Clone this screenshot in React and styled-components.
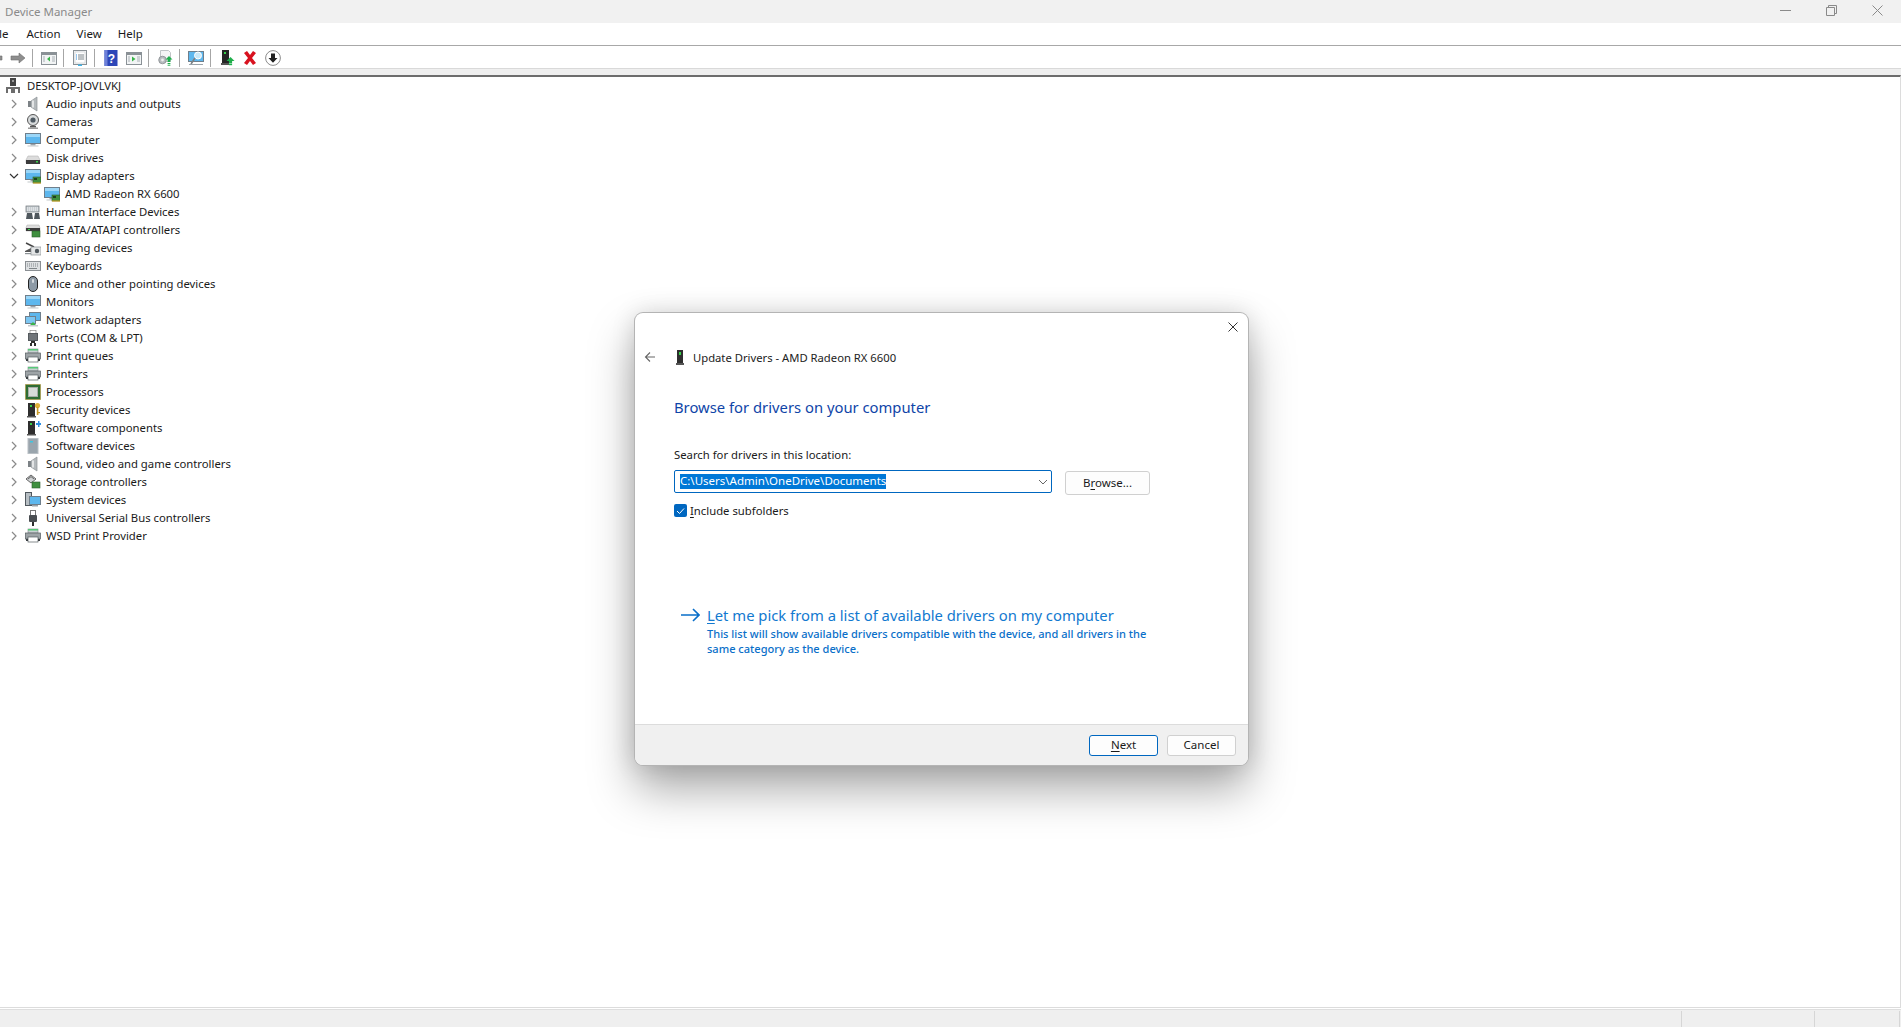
import styled, { createGlobalStyle } from "styled-components";

const GlobalStyle = createGlobalStyle`
  html, body {
    margin: 0;
    padding: 0;
    background: #ffffff;
    overflow: hidden;
  }
  * {
    box-sizing: border-box;
  }
`;

const uiFont = `"Noto Sans", "Open Sans", "Liberation Sans", sans-serif`;

const Page = styled.div`
  width: 1901px;
  height: 1027px;
  display: flex;
  flex-direction: column;
  position: relative;
  font-family: ${uiFont};
  font-size: 11.5px;
  color: #1a1a1a;
  background: #ffffff;
`;

const TitleBar = styled.header`
  height: 23px;
  flex: none;
  display: flex;
  align-items: center;
  justify-content: space-between;
  background: #f1f1f1;
  padding-left: 5px;
  color: #8a8a8a;
`;

const WindowControls = styled.div`
  display: flex;
  gap: 35px;
  padding-right: 18px;
  padding-bottom: 3px;
`;

const MenuBar = styled.nav`
  height: 23px;
  flex: none;
  display: flex;
  align-items: center;
  padding-bottom: 2px;
  border-bottom: 1px solid #a8a8a8;
  overflow: hidden;
`;

const MenuItem = styled.span`
  margin-left: ${(p) => p.$left}px;
`;

const ToolBar = styled.div`
  height: 23px;
  flex: none;
  display: flex;
  align-items: center;
  padding-top: 2px;
  border-bottom: 1px solid #d9d9d9;
  background: #ffffff;
`;

const ToolButton = styled.span`
  width: 23px;
  height: 20px;
  flex: none;
  display: flex;
  align-items: center;
  padding-left: 3px;
  margin-left: ${(p) => p.$offset || 0}px;
`;

const ToolSep = styled.span`
  width: 8px;
  height: 18px;
  flex: none;
  padding-left: 2px;
  &::before {
    content: "";
    display: block;
    width: 1px;
    height: 100%;
    background: #a6a6a6;
  }
`;

const Strip = styled.div`
  height: 6px;
  flex: none;
  background: #efefef;
`;

const TreePane = styled.main`
  flex: 1;
  border-top: 2px solid #6d6d6d;
  border-right: 1px solid #dcdcdc;
  border-bottom: 1px solid #dcdcdc;
  font-size: 11.3px;
`;

const Row = styled.div`
  height: 18px;
  display: flex;
  align-items: center;
  padding-left: ${(p) => p.$indent}px;
  padding-bottom: 1px;
  white-space: nowrap;
`;

const Expander = styled.span`
  width: 25px;
  height: 17px;
  flex: none;
  display: flex;
  align-items: center;
  justify-content: center;
  padding-left: 3px;
`;

const RowIcon = styled.span`
  width: 16px;
  height: 16px;
  flex: none;
  display: flex;
  margin-right: ${(p) => p.$gap}px;
`;

const StatusBar = styled.footer`
  height: 18px;
  flex: none;
  margin-top: 1px;
  display: flex;
  justify-content: flex-end;
  background: #efefef;
  border-top: 1px solid #dedede;
`;

const StatusCell = styled.span`
  width: ${(p) => p.$width}px;
  height: 100%;
  margin-top: 1px;
  border-left: 1px solid #d6d6d6;
`;

const DialogShadow = styled.div`
  position: absolute;
  left: 635px;
  top: 313px;
  width: 613px;
  height: 452px;
  border-radius: 8px;
  box-shadow: 0 24px 46px rgba(0, 0, 0, 0.34), 0 0 24px rgba(0, 0, 0, 0.14);
`;

const Dialog = styled.section`
  position: absolute;
  left: 635px;
  top: 313px;
  width: 613px;
  height: 452px;
  display: flex;
  flex-direction: column;
  background: #ffffff;
  border-radius: 8px;
  overflow: hidden;
  box-shadow: 0 0 0 1px #b4b4b4;
`;

const CloseButton = styled.span`
  position: absolute;
  top: 9px;
  right: 10px;
  width: 10px;
  height: 10px;
  display: flex;
`;

const DialogBody = styled.div`
  flex: 1;
  padding: 35px 0 0 39px;
`;

const DialogHeader = styled.div`
  height: 20px;
  display: flex;
  align-items: center;
  margin-left: -30px;
  padding-bottom: 2px;
  font-size: 11.25px;
  color: #222222;
`;

const BackArrow = styled.span`
  width: 12px;
  height: 12px;
  display: flex;
  margin-right: 20px;
`;

const DeviceIcon = styled.span`
  width: 8px;
  height: 15px;
  display: flex;
  margin-right: 9px;
`;

const Heading = styled.h1`
  margin: 27px 0 0;
  height: 24px;
  line-height: 24px;
  font-size: 14.8px;
  font-weight: 400;
  color: #0f45a8;
`;

const FieldLabel = styled.div`
  margin-top: 26px;
  height: 20px;
  line-height: 20px;
  font-size: 11.3px;
`;

const FieldRow = styled.div`
  margin-top: 5px;
  display: flex;
  align-items: flex-start;
  gap: 13px;
`;

const Combo = styled.div`
  width: 378px;
  height: 23px;
  display: flex;
  align-items: center;
  justify-content: space-between;
  padding: 0 3px 0 5px;
  border: 1px solid #0067c0;
  border-radius: 2px;
`;

const Selected = styled.span`
  height: 15px;
  line-height: 13px;
  background: #0078d7;
  color: #ffffff;
`;

const Button = styled.span`
  width: ${(p) => p.$width}px;
  height: ${(p) => p.$height}px;
  display: flex;
  align-items: center;
  justify-content: center;
  padding-bottom: 2px;
  background: #fdfdfd;
  border: 1px solid ${(p) => (p.$primary ? "#0067c0" : "#d0d0d0")};
  border-radius: 3px;
  margin-top: ${(p) => p.$top || 0}px;
`;

const Mnemonic = styled.span`
  text-decoration: underline;
  text-underline-offset: 2px;
`;

const CheckRow = styled.label`
  margin-top: 9px;
  height: 13px;
  display: flex;
  align-items: center;
  gap: 3px;
  font-size: 11.3px;
`;

const CheckBox = styled.span`
  width: 13px;
  height: 13px;
  display: flex;
  align-items: center;
  justify-content: center;
  background: #0067c0;
  border-radius: 2px;
`;

const LinkBlock = styled.a`
  margin: 87px 0 0 7px;
  display: grid;
  grid-template-columns: 26px auto;
  color: #0a6fc9;
`;

const LinkArrow = styled.span`
  height: 22px;
  display: flex;
  align-items: center;
`;

const LinkTitle = styled.span`
  height: 22px;
  line-height: 22px;
  font-size: 14.8px;
  color: #1279d0;
`;

const LinkNote = styled.span`
  grid-column: 2;
  width: 446px;
  line-height: 15px;
  font-size: 11.05px;
  font-weight: 500;
`;

const Footer = styled.div`
  height: 41px;
  flex: none;
  display: flex;
  align-items: center;
  justify-content: flex-end;
  gap: 9px;
  padding-right: 12px;
  background: #f0f0f0;
  border-top: 1px solid #dcdcdc;
`;

const Svg = ({ children, size = 16, box = 16 }) => (
  <svg width={size} height={size} viewBox={`0 0 ${box} ${box}`}>
    {children}
  </svg>
);

const Screen = ({ w = 15 }) => (
  <>
    <rect x="0.5" y="1.5" width={w} height="10" fill="#5db7ee" stroke="#6f7f8c" />
    <rect x="1" y="2" width={w - 1} height="3" fill="#9bd6f7" />
    <rect x={w / 2 - 2} y="12" width="5" height="1.5" fill="#9aa3aa" />
    <rect x={w / 2 - 5} y="13.5" width="11" height="1" fill="#c4c9cc" />
  </>
);

const GreenCard = ({ x = 8, y = 9 }) => (
  <>
    <rect x={x} y={y} width="8" height="6" fill="#3f8f3f" stroke="#2c5f2c" strokeWidth="0.6" />
    <rect x={x + 1} y={y + 1} width="3" height="2" fill="#1f3f1f" />
    <rect x={x} y={y + 5.5} width="8" height="1" fill="#d9a520" />
  </>
);

const Speaker = () => (
  <>
    <rect x="3" y="5" width="3" height="6" fill="#7c8286" />
    <path d="M6 5l6-4v14l-6-4z" fill="#b4b9bc" stroke="#8c9296" strokeWidth="0.7" />
    <rect x="7" y="4.5" width="2" height="7" fill="#e3e5e6" />
  </>
);

const Tower = ({ fill = "#2e2e2e", dot = "#37d24a" }) => (
  <>
    <rect x="3" y="1" width="7" height="13" fill={fill} />
    <rect x="5" y="3" width="2" height="2" fill={dot} />
    <rect x="2" y="14" width="9" height="1.5" fill="#555555" />
  </>
);

const Printer = () => (
  <>
    <rect x="3" y="1" width="10" height="4" fill="#c9d0d2" stroke="#7d8588" strokeWidth="0.6" />
    <rect x="3" y="1" width="10" height="1.5" fill="#57c878" />
    <rect x="0.5" y="5" width="15" height="6" fill="#9ea4a7" stroke="#555c60" strokeWidth="0.7" />
    <rect x="3" y="9" width="10" height="5" fill="#ffffff" stroke="#555c60" strokeWidth="0.7" />
    <rect x="1" y="11" width="2" height="2" fill="#3a3f42" />
    <rect x="13" y="11" width="2" height="2" fill="#3a3f42" />
  </>
);

const treeIcons = {
  root: (
    <>
      <rect x="5" y="0" width="6" height="8" fill="#444444" />
      <rect x="7" y="2" width="2" height="2" fill="#9a9a9a" />
      <rect x="1" y="9" width="14" height="6" fill="#6c6c6c" />
      <rect x="3" y="11" width="3" height="4" fill="#ffffff" />
      <rect x="10" y="11" width="3" height="4" fill="#ffffff" />
    </>
  ),
  audio: <Speaker />,
  camera: (
    <>
      <circle cx="8" cy="6" r="5.5" fill="#d9dcdd" stroke="#555555" />
      <circle cx="8" cy="6" r="2.6" fill="#4f5a63" />
      <rect x="5" y="12" width="6" height="1.5" fill="#555555" />
      <rect x="3" y="13.5" width="10" height="1.5" fill="#9a9a9a" />
    </>
  ),
  computer: <Screen />,
  disk: (
    <>
      <path d="M3 6h10l2 4v3H1v-3z" fill="#dcdcdc" stroke="#b5b5b5" strokeWidth="0.6" />
      <rect x="1" y="10" width="14" height="4" fill="#3b3b3b" />
      <rect x="11" y="11" width="2" height="1.5" fill="#37d24a" />
    </>
  ),
  display: (
    <>
      <Screen />
      <GreenCard />
    </>
  ),
  hid: (
    <>
      <rect x="1" y="2" width="13" height="6" fill="#c8ced2" stroke="#6c7378" strokeWidth="0.7" />
      <path d="M2 4h11M2 6h11" stroke="#ffffff" strokeWidth="0.8" strokeDasharray="1 1" />
      <path d="M1 15l1-6h5l1 6zM9 15l1-6h4l1 6z" fill="#50585e" />
    </>
  ),
  ide: (
    <>
      <path d="M2 3h12l1 3v3H1V6z" fill="#dcdcdc" stroke="#b5b5b5" strokeWidth="0.6" />
      <rect x="1" y="6" width="14" height="3" fill="#3b3b3b" />
      <rect x="3" y="7" width="2" height="1" fill="#37d24a" />
      <GreenCard x="7" y="9" />
    </>
  ),
  imaging: (
    <>
      <path d="M1 3l8 4" stroke="#444444" strokeWidth="1.4" />
      <path d="M0 11l6-3v4H0z" fill="#555555" />
      <rect x="6" y="7" width="10" height="8" fill="#e3e5e6" stroke="#8c9296" strokeWidth="0.7" />
      <circle cx="12" cy="11" r="2.2" fill="#50585e" />
      <rect x="0" y="13" width="6" height="1.2" fill="#8c9296" />
    </>
  ),
  keyboard: (
    <>
      <rect x="0.5" y="3.5" width="15" height="9" fill="#dde0e2" stroke="#8a8f93" />
      <path d="M2 6h12M2 8h12" stroke="#80868a" strokeWidth="1" strokeDasharray="1 1" />
      <rect x="4" y="10" width="8" height="1" fill="#80868a" />
    </>
  ),
  mouse: (
    <>
      <rect x="3.5" y="0.5" width="9" height="15" rx="4.5" fill="#8d9aa6" stroke="#222222" />
      <rect x="7" y="3" width="2" height="4" rx="1" fill="#d5dade" />
    </>
  ),
  network: (
    <>
      <rect x="4.5" y="0.5" width="11" height="8" fill="#5db7ee" stroke="#6f7f8c" />
      <rect x="0.5" y="4.5" width="10" height="7" fill="#7cc6f2" stroke="#6f7f8c" />
      <path d="M3 13h10v1.5H3z" fill="#c4c9cc" />
      <path d="M8 10l3 3H5z" fill="#39b54a" />
    </>
  ),
  ports: (
    <>
      <rect x="5" y="0.5" width="6" height="3" fill="#ffffff" stroke="#888888" strokeWidth="0.7" />
      <rect x="3" y="3" width="10" height="8" fill="#555a5e" />
      <path d="M4 5h8M4 7h8M4 9h8" stroke="#9aa0a4" strokeWidth="0.8" />
      <rect x="6" y="11" width="4" height="2" fill="#2e2e2e" />
      <rect x="5" y="13" width="2" height="3" fill="#2e2e2e" />
      <rect x="9" y="13" width="2" height="3" fill="#2e2e2e" />
    </>
  ),
  printer: <Printer />,
  processor: (
    <>
      <rect x="0.5" y="0.5" width="15" height="15" fill="#2f6d33" stroke="#b08a24" strokeDasharray="1 1" />
      <rect x="3.5" y="3.5" width="9" height="9" fill="#d8dcd8" stroke="#a8ada8" />
    </>
  ),
  security: (
    <>
      <Tower />
      <circle cx="12.5" cy="3.5" r="2.6" fill="#e0b23a" />
      <rect x="11.8" y="5" width="1.6" height="8" fill="#c99a26" />
      <rect x="13" y="10" width="2" height="1.2" fill="#c99a26" />
    </>
  ),
  softcomp: (
    <>
      <Tower />
      <path d="M11 3h2V1h1.5v2h1.5v2h-1.5v2H13V5h-2z" fill="#2f8fe0" />
    </>
  ),
  softdev: (
    <>
      <rect x="3" y="0.5" width="10" height="15" fill="#9aa5ad" stroke="#b9c0c5" />
      <rect x="5" y="3" width="3" height="1.5" fill="#3fc6e0" />
    </>
  ),
  sound: <Speaker />,
  storage: (
    <>
      <path d="M1 5l5-4 5 4-5 4z" fill="#d0d3d5" stroke="#444444" strokeWidth="0.8" />
      <path d="M3 5l3-2.4L9 5" fill="none" stroke="#444444" strokeWidth="0.8" />
      <GreenCard x="7" y="8" />
    </>
  ),
  system: (
    <>
      <rect x="0.5" y="0.5" width="6" height="13" fill="#b7bec3" stroke="#50585e" />
      <rect x="4.5" y="4.5" width="11" height="8" fill="#5db7ee" stroke="#6f7f8c" />
      <rect x="7" y="13" width="6" height="1.5" fill="#9aa3aa" />
    </>
  ),
  usb: (
    <>
      <rect x="5.5" y="0.5" width="5" height="5" fill="#ffffff" stroke="#777777" />
      <rect x="4" y="5" width="8" height="7" rx="1" fill="#4a4e52" />
      <rect x="7" y="12" width="2" height="4" fill="#2e2e2e" />
    </>
  ),
  wsd: <Printer />,
};

const toolIcons = {
  back: <path d="M1 8l6-5v3h8v4H7v3z" fill="#8e8e8e" stroke="#6e6e6e" strokeWidth="0.6" />,
  forward: <path d="M15 8l-6-5v3H1v4h8v3z" fill="#8e8e8e" stroke="#6e6e6e" strokeWidth="0.6" />,
  pane: (
    <>
      <rect x="0.5" y="2.5" width="15" height="12" fill="#f2f4f5" stroke="#8a9196" />
      <rect x="0.5" y="2.5" width="15" height="2.5" fill="#8a9196" />
      <path d="M9 6.5L6 9l3 2.5z" fill="#39b54a" />
      <path d="M2 7h2M2 9h2M2 11h2M11 7h3M11 9h3M11 11h3" stroke="#a9b0b5" />
    </>
  ),
  props: (
    <>
      <rect x="1.5" y="0.5" width="13" height="14" fill="#f4f5f6" stroke="#8a9196" />
      <rect x="3" y="2" width="10" height="11" fill="#ffffff" stroke="#c5cacd" strokeWidth="0.6" />
      <path d="M4 5h1M4 7h1M4 9h1" stroke="#2f8fe0" />
      <path d="M6 5h6M6 7h6M6 9h6" stroke="#7d858a" />
      <rect x="6" y="14.5" width="4" height="1.5" fill="#3fb4e8" />
    </>
  ),
  help: (
    <>
      <rect x="1.5" y="0" width="13" height="16" fill="#2d46b8" />
      <rect x="1.5" y="0" width="3" height="16" fill="#6d80d8" />
      <text x="8.5" y="12.5" fill="#ffffff" fontSize="12" fontWeight="700" fontFamily="Liberation Sans, sans-serif" textAnchor="middle">?</text>
    </>
  ),
  panePlay: (
    <>
      <rect x="0.5" y="2.5" width="15" height="12" fill="#f2f4f5" stroke="#8a9196" />
      <rect x="0.5" y="2.5" width="15" height="2.5" fill="#8a9196" />
      <path d="M6 6.5L9.5 9 6 11.5z" fill="#39b54a" />
      <path d="M2 7h2M2 9h2M2 11h2M11 7h3M11 9h3M11 11h3" stroke="#a9b0b5" />
    </>
  ),
  driver: (
    <>
      <path d="M3.5 0.5h8l2 2v9h-10z" fill="#f5f5f5" stroke="#c0c4c6" />
      <circle cx="5.5" cy="10" r="3.8" fill="#b7bcbf" stroke="#7b8084" strokeWidth="0.7" />
      <circle cx="5.5" cy="10" r="1.4" fill="#eeeeee" />
      <path d="M12 6l3.5 3.5H13.4V12h-2.8V9.5H8.5z" fill="#1fae4b" />
      <rect x="10.6" y="13" width="2.8" height="1" fill="#1fae4b" />
      <rect x="10.6" y="14.7" width="2.8" height="1" fill="#1fae4b" />
    </>
  ),
  scan: (
    <>
      <rect x="0.5" y="1.5" width="15" height="10" fill="#5db7ee" stroke="#6f7f8c" />
      <circle cx="10" cy="5.5" r="3.5" fill="#c8e8f8" stroke="#ffffff" />
      <path d="M7 8l-4 6" stroke="#7b8084" strokeWidth="1.6" />
      <rect x="1" y="14" width="14" height="1" fill="#9aa3aa" />
    </>
  ),
  enable: (
    <>
      <rect x="3" y="0" width="7" height="13" fill="#262626" />
      <rect x="5" y="2" width="2" height="2" fill="#37d24a" />
      <rect x="2" y="13" width="8" height="2" fill="#555555" />
      <path d="M11.5 7l4 4h-2.4v2.5h-3.2V11H7.5z" fill="#1fae4b" />
      <rect x="9.9" y="14" width="3.2" height="1.2" fill="#1fae4b" />
    </>
  ),
  remove: <path d="M2 3l3-2 3 4 3-4 3 2-4 5 4 5-3 2-3-4-3 4-3-2 4-5z" fill="#d8121f" />,
  update: (
    <>
      <circle cx="8" cy="8" r="7.4" fill="#ffffff" stroke="#8c8c8c" />
      <path d="M6 3.5h4V8h2.5L8 12.8 3.5 8H6z" fill="#1f1f1f" />
    </>
  ),
};

const toolbarLayout = [
  "back",
  "forward",
  null,
  "pane",
  null,
  "props",
  null,
  "help",
  "panePlay",
  null,
  "driver",
  null,
  "scan",
  null,
  "enable",
  "remove",
  "update",
];

const devices = [
  ["audio", "Audio inputs and outputs"],
  ["camera", "Cameras"],
  ["computer", "Computer"],
  ["disk", "Disk drives"],
  ["display", "Display adapters", true],
  ["hid", "Human Interface Devices"],
  ["ide", "IDE ATA/ATAPI controllers"],
  ["imaging", "Imaging devices"],
  ["keyboard", "Keyboards"],
  ["mouse", "Mice and other pointing devices"],
  ["computer", "Monitors"],
  ["network", "Network adapters"],
  ["ports", "Ports (COM & LPT)"],
  ["printer", "Print queues"],
  ["printer", "Printers"],
  ["processor", "Processors"],
  ["security", "Security devices"],
  ["softcomp", "Software components"],
  ["softdev", "Software devices"],
  ["sound", "Sound, video and game controllers"],
  ["storage", "Storage controllers"],
  ["system", "System devices"],
  ["usb", "Universal Serial Bus controllers"],
  ["wsd", "WSD Print Provider"],
];

function Chevron({ open }) {
  return open ? (
    <svg width="10" height="6" viewBox="0 0 10 6">
      <path d="M1 1l4 4 4-4" fill="none" stroke="#333333" strokeWidth="1.2" />
    </svg>
  ) : (
    <svg width="6" height="10" viewBox="0 0 6 10">
      <path d="M1 1l4 4-4 4" fill="none" stroke="#8a8a8a" strokeWidth="1.2" />
    </svg>
  );
}

function DeviceRow({ icon, label, open }) {
  return (
    <Row $indent={0}>
      <Expander>
        <Chevron open={open} />
      </Expander>
      <RowIcon $gap={5}>
        <Svg>{treeIcons[icon]}</Svg>
      </RowIcon>
      {label}
    </Row>
  );
}

function App() {
  return (
    <Page>
      <GlobalStyle />
      <TitleBar>
        Device Manager
        <WindowControls>
          <Svg size={11} box={11}>
            <path d="M0 5.5h11" stroke="#8a8a8a" />
          </Svg>
          <Svg size={11} box={11}>
            <path d="M0.5 2.5h8v8h-8zM2.5 2.5v-2h8v8h-2" fill="none" stroke="#8a8a8a" />
          </Svg>
          <Svg size={11} box={11}>
            <path d="M0.5 0.5l10 10M10.5 0.5l-10 10" stroke="#8a8a8a" />
          </Svg>
        </WindowControls>
      </TitleBar>

      <MenuBar>
        <MenuItem $left={-1}>le</MenuItem>
        <MenuItem $left={18}>Action</MenuItem>
        <MenuItem $left={16}>View</MenuItem>
        <MenuItem $left={16}>Help</MenuItem>
      </MenuBar>

      <ToolBar>
        {toolbarLayout.map((tool, i) =>
          tool ? (
            <ToolButton key={i} $offset={i === 0 ? -16 : 0}>
              <Svg>{toolIcons[tool]}</Svg>
            </ToolButton>
          ) : (
            <ToolSep key={i} />
          )
        )}
      </ToolBar>
      <Strip />

      <TreePane>
        <Row $indent={5}>
          <RowIcon $gap={6}>
            <Svg>{treeIcons.root}</Svg>
          </RowIcon>
          DESKTOP-JOVLVKJ
        </Row>
        {devices.map(([icon, label, open]) => (
          <div key={label}>
            <DeviceRow icon={icon} label={label} open={open} />
            {open && (
              <Row $indent={44}>
                <RowIcon $gap={5}>
                  <Svg>{treeIcons.display}</Svg>
                </RowIcon>
                AMD Radeon RX 6600
              </Row>
            )}
          </div>
        ))}
      </TreePane>

      <StatusBar>
        <StatusCell $width={133} />
        <StatusCell $width={85} />
        <StatusCell $width={2} />
      </StatusBar>

      <DialogShadow />
      <Dialog>
        <CloseButton>
          <Svg size={10} box={10}>
            <path d="M0.5 0.5l9 9M9.5 0.5l-9 9" stroke="#333333" strokeWidth="1" />
          </Svg>
        </CloseButton>
        <DialogBody>
          <DialogHeader>
            <BackArrow>
              <Svg size={12} box={12}>
                <path d="M11 6H1.5M6 1.5L1.5 6 6 10.5" fill="none" stroke="#666666" strokeWidth="1.1" />
              </Svg>
            </BackArrow>
            <DeviceIcon>
              <svg width="8" height="15" viewBox="0 0 8 15">
                <rect x="1" y="0" width="6" height="13" fill="#2e2e2e" />
                <rect x="3" y="2" width="2" height="3" fill="#37d24a" />
                <rect x="0" y="13" width="8" height="2" fill="#555555" />
              </svg>
            </DeviceIcon>
            Update Drivers - AMD Radeon RX 6600
          </DialogHeader>
          <Heading>Browse for drivers on your computer</Heading>
          <FieldLabel>Search for drivers in this location:</FieldLabel>
          <FieldRow>
            <Combo>
              <Selected>C:\Users\Admin\OneDrive\Documents</Selected>
              <svg width="10" height="6" viewBox="0 0 10 6">
                <path d="M1 1l4 4 4-4" fill="none" stroke="#666666" />
              </svg>
            </Combo>
            <Button $width={85} $height={24} $top={1}>
              <span>
                B<Mnemonic>r</Mnemonic>owse...
              </span>
            </Button>
          </FieldRow>
          <CheckRow>
            <CheckBox>
              <svg width="9" height="8" viewBox="0 0 9 8">
                <path d="M1 4l2.5 2.5L8 1.5" fill="none" stroke="#ffffff" />
              </svg>
            </CheckBox>
            <span>
              <Mnemonic>I</Mnemonic>nclude subfolders
            </span>
          </CheckRow>
          <LinkBlock>
            <LinkArrow>
              <svg width="19" height="14" viewBox="0 0 19 14">
                <path d="M0 7h18M12 1l6 6-6 6" fill="none" stroke="#0a6fc9" strokeWidth="1.6" />
              </svg>
            </LinkArrow>
            <LinkTitle>
              <Mnemonic>L</Mnemonic>et me pick from a list of available drivers on my computer
            </LinkTitle>
            <LinkNote>
              This list will show available drivers compatible with the device, and all drivers in the same category as the device.
            </LinkNote>
          </LinkBlock>
        </DialogBody>
        <Footer>
          <Button $width={69} $height={21} $primary>
            <span>
              <Mnemonic>N</Mnemonic>ext
            </span>
          </Button>
          <Button $width={69} $height={21}>
            Cancel
          </Button>
        </Footer>
      </Dialog>
    </Page>
  );
}

export default App;
